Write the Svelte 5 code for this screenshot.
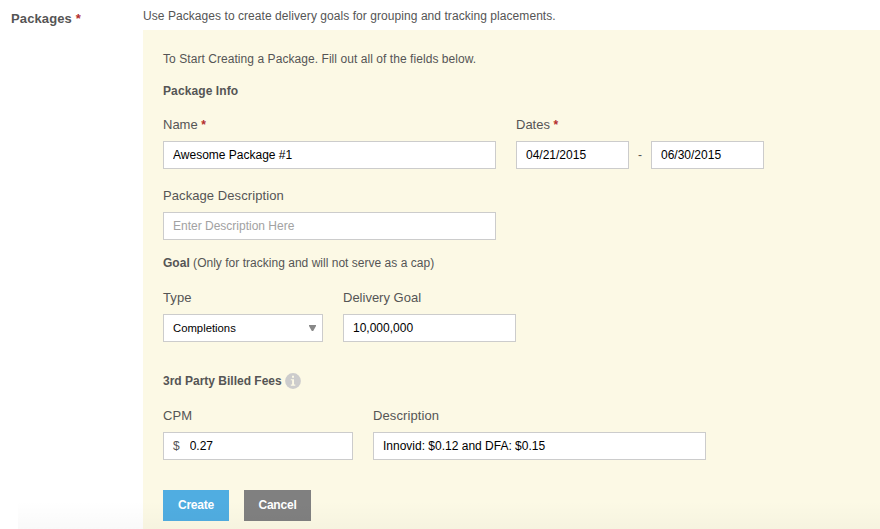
<script>
  let name = $state('Awesome Package #1');
  let startDate = $state('04/21/2015');
  let endDate = $state('06/30/2015');
  let description = $state('');
  let deliveryGoal = $state('10,000,000');
  let cpm = $state('0.27');
  let feeDescription = $state('Innovid: $0.12 and DFA: $0.15');
</script>

<div class="page">
  <div class="side">Packages <span class="req">*</span></div>
  <div class="main">
    <p class="lead">Use Packages to create delivery goals for grouping and tracking placements.</p>
    <form class="panel">
      <p class="intro">To Start Creating a Package. Fill out all of the fields below.</p>
      <h2 class="info-title">Package Info</h2>

      <div class="row names">
        <div class="field wide">
          <label for="name">Name <span class="req">*</span></label>
          <input id="name" bind:value={name} />
        </div>
        <div class="field">
          <label for="start">Dates <span class="req">*</span></label>
          <div class="dates">
            <input id="start" bind:value={startDate} />
            <span class="dash">-</span>
            <input bind:value={endDate} aria-label="End date" />
          </div>
        </div>
      </div>

      <div class="row about">
        <div class="field wide">
          <label class="spaced" for="desc">Package Description</label>
          <input id="desc" bind:value={description} placeholder="Enter Description Here" />
        </div>
      </div>

      <p class="goal"><b>Goal</b> (Only for tracking and will not serve as a cap)</p>

      <div class="row goals">
        <div class="field type">
          <span class="label">Type</span>
          <div class="box select" role="button" tabindex="0">
            <span>Completions</span>
            <svg width="7" height="6" viewBox="0 0 7 6"><path d="M0 0h7v1L4.2 6H2.8L0 1z" fill="#888" /></svg>
          </div>
        </div>
        <div class="field delivery">
          <label for="goal">Delivery Goal</label>
          <input id="goal" bind:value={deliveryGoal} />
        </div>
      </div>

      <h2 class="fees-title">
        3rd Party Billed Fees
        <svg width="16" height="16" viewBox="0 0 16 16">
          <circle cx="8" cy="8" r="7.9" fill="#ccc" />
          <path d="M7 2.8h2v2H7zM5.8 6.2H9v5.4h1.3v1.1H5.8v-1.1h1.3V7.3H5.8z" fill="#fcf9e5" />
        </svg>
      </h2>

      <div class="row fees">
        <div class="field cpm">
          <label for="cpm">CPM</label>
          <div class="box money">
            <span class="sign">$</span>
            <input id="cpm" bind:value={cpm} />
          </div>
        </div>
        <div class="field wide">
          <label for="fee">Description</label>
          <input id="fee" bind:value={feeDescription} />
        </div>
      </div>

      <div class="actions">
        <button type="button" class="create">Create</button>
        <button type="button" class="cancel">Cancel</button>
      </div>
    </form>
  </div>
  <div class="fade"></div>
</div>

<style>
  :global(body) { background: #fff; }
  .page {
    position: relative;
    display: flex;
    width: 880px;
    height: 529px;
    overflow: hidden;
    font: 12px/16px "Liberation Sans", Arial, Helvetica, sans-serif;
    color: #555;
  }
  .side {
    padding: 11px 0 0 11px;
    box-sizing: border-box;
    flex: 0 0 143px;
    font-size: 13px;
    font-weight: bold;
    letter-spacing: 0.12px;
  }
  .main { flex: 1; display: flex; flex-direction: column; }
  p, h2 { margin: 0; font-size: 12px; line-height: 16px; white-space: nowrap; }
  .lead { padding: 8px 0 6px; letter-spacing: 0.06px; }
  .req { color: #b32d2d; font-weight: bold; }
  .panel {
    flex: 1;
    box-sizing: border-box;
    padding: 21px 0 0 20px;
    background: #fcf9e5;
  }
  .intro { letter-spacing: 0.06px; }
  .info-title { margin-top: 16px; letter-spacing: 0.1px; }
  .row { display: flex; gap: 20px; }
  .names { margin-top: 18px; }
  .about { margin-top: 19px; }
  .goal { margin-top: 15px; letter-spacing: 0.02px; }
  .goals { margin-top: 19px; }
  .fees-title { display: flex; align-items: center; gap: 3px; margin-top: 31px; }
  .fees { margin-top: 19px; }
  .field { display: flex; flex-direction: column; gap: 8px; }
  .wide { width: 333px; }
  .type { width: 160px; }
  .delivery { width: 173px; }
  .cpm { width: 190px; }
  label, .label { display: block; font-size: 13px; line-height: 16px; }
  .label, .fees label { letter-spacing: 0.1px; }
  label .req { font-size: 12px; }
  .spaced { letter-spacing: 0.08px; }
  input, .box {
    box-sizing: border-box;
    width: 100%;
    height: 28px;
    margin: 0;
    padding: 0 9px;
    border: 1px solid #ccc;
    border-radius: 0;
    background: #fff;
    color: #000;
    font: 12px/16px "Liberation Sans", Arial, Helvetica, sans-serif;
    outline: none;
  }
  input::placeholder { color: #a2a2a2; opacity: 1; }
  .dates { display: flex; align-items: center; }
  .dates input { width: 113px; }
  .dash { width: 22px; text-align: center; }
  .select { display: flex; align-items: center; justify-content: space-between; padding: 0 6px 1px 9px; }
  .select span { font-size: 11.3px; }
  .money { display: flex; align-items: center; gap: 10px; }
  .money input { flex: 1; height: 20px; padding: 0; border: 0; }
  .sign { color: #555; }
  .actions { display: flex; gap: 15px; margin-top: 30px; }
  button {
    height: 31px;
    padding: 0 0 2px;
    border: 0;
    color: #fff;
    font: bold 12px/16px "Liberation Sans", Arial, Helvetica, sans-serif;
    letter-spacing: -0.2px;
  }
  .create { width: 66px; background: #50ade1; }
  .cancel { width: 67px; background: #808080; }
  .fade {
    position: absolute;
    left: 18px;
    right: 0;
    bottom: 0;
    height: 28px;
    pointer-events: none;
    background: linear-gradient(rgba(0, 0, 0, 0), rgba(0, 0, 0, 0.025));
  }
</style>
